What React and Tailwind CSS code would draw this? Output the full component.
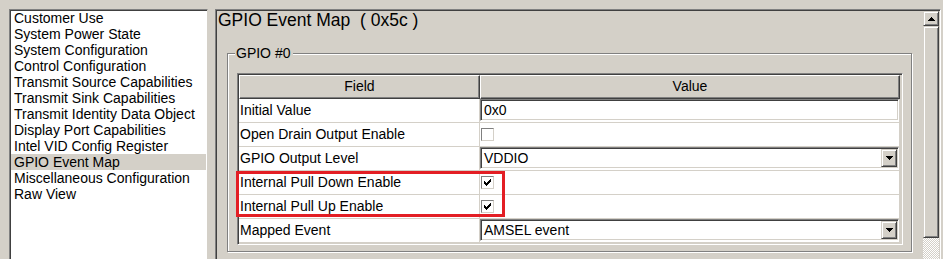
import React from "react";

const listItems = [
  "Customer Use",
  "System Power State",
  "System Configuration",
  "Control Configuration",
  "Transmit Source Capabilities",
  "Transmit Sink Capabilities",
  "Transmit Identity Data Object",
  "Display Port Capabilities",
  "Intel VID Config Register",
  "GPIO Event Map",
  "Miscellaneous Configuration",
  "Raw View",
];

function DownArrow() {
  return (
    <svg width="7" height="4" viewBox="0 0 7 4" shapeRendering="crispEdges">
      <rect x="0" y="0" width="7" height="1" fill="#000" />
      <rect x="1" y="1" width="5" height="1" fill="#000" />
      <rect x="2" y="2" width="3" height="1" fill="#000" />
      <rect x="3" y="3" width="1" height="1" fill="#000" />
    </svg>
  );
}

function UpArrow() {
  return (
    <svg width="7" height="4" viewBox="0 0 7 4" shapeRendering="crispEdges">
      <rect x="3" y="0" width="1" height="1" fill="#000" />
      <rect x="2" y="1" width="3" height="1" fill="#000" />
      <rect x="1" y="2" width="5" height="1" fill="#000" />
      <rect x="0" y="3" width="7" height="1" fill="#000" />
    </svg>
  );
}

function Check() {
  const px = [
    [6, 0],
    [5, 1], [6, 1],
    [0, 2], [4, 2], [5, 2], [6, 2],
    [0, 3], [1, 3], [3, 3], [4, 3], [5, 3],
    [0, 4], [1, 4], [2, 4], [3, 4], [4, 4],
    [1, 5], [2, 5], [3, 5],
    [2, 6],
  ];
  return (
    <svg width="7" height="7" viewBox="0 0 7 7" shapeRendering="crispEdges">
      {px.map(([x, y], i) => (
        <rect key={i} x={x} y={y} width="1" height="1" fill="#000" />
      ))}
    </svg>
  );
}

function Checkbox({ checked }) {
  return (
    <div className="ml-[1px] mt-[5px] w-[13px] h-[13px] bg-white border border-t-[#808080] border-l-[#808080] border-r-[#d4d0c8] border-b-[#d4d0c8] flex items-center justify-center">
      {checked ? <Check /> : null}
    </div>
  );
}

function TextBox({ value }) {
  return (
    <div className="w-[419px] h-[22px] bg-white border border-t-[#808080] border-l-[#808080] border-r-white border-b-white shadow-[inset_1px_1px_0_#404040,inset_-1px_-1px_0_#d4d0c8] pl-[3px] leading-[20px]">
      {value}
    </div>
  );
}

function Dropdown({ value }) {
  return (
    <div className="w-[419px] h-[22px] bg-white border border-t-[#808080] border-l-[#808080] border-r-white border-b-white shadow-[inset_1px_1px_0_#404040,inset_-1px_-1px_0_#d4d0c8] flex p-[1px]">
      <div className="flex-1 pl-[2px] leading-[18px]">{value}</div>
      <div className="w-[16px] h-[18px] bg-[#d4d0c8] border border-t-[#d4d0c8] border-l-[#d4d0c8] border-r-[#404040] border-b-[#404040] shadow-[inset_1px_1px_0_#fff,inset_-1px_-1px_0_#808080] flex items-center justify-center">
        <DownArrow />
      </div>
    </div>
  );
}

const rows = [
  { field: "Initial Value", kind: "text", value: "0x0" },
  { field: "Open Drain Output Enable", kind: "check", value: false },
  { field: "GPIO Output Level", kind: "drop", value: "VDDIO" },
  { field: "Internal Pull Down Enable", kind: "check", value: true },
  { field: "Internal Pull Up Enable", kind: "check", value: true },
  { field: "Mapped Event", kind: "drop", value: "AMSEL event" },
];

export default function App() {
  return (
    <div className="relative w-[943px] h-[259px] overflow-hidden bg-[#d4d0c8] font-['Liberation_Sans',Arial,sans-serif] text-[14px] text-black">
      <div className="flex items-start pt-[9px] pl-[9px]">
        {/* Navigation list */}
        <div className="w-[199px] h-[260px] shrink-0 bg-white border border-t-[#808080] border-l-[#808080] border-r-[#d4d0c8] border-b-white shadow-[inset_1px_1px_0_#404040] px-[1px]">
          {listItems.map((t) => (
            <div
              key={t}
              className={
                "h-[16px] leading-[16px] pl-[3px] whitespace-nowrap " +
                (t === "GPIO Event Map" ? "bg-[#d4d0c8]" : "")
              }
            >
              {t}
            </div>
          ))}
        </div>

        {/* Main panel */}
        <div className="ml-[7px] w-[726px] h-[262px] shrink-0 flex border border-t-[#808080] border-l-[#808080] border-r-white border-b-white shadow-[inset_1px_1px_0_#404040] p-[1px]">
          <div className="w-[706px] pl-[1px]">
            <div className="h-[19px] leading-[19px] text-[17.5px] whitespace-pre">
              GPIO Event Map  ( 0x5c )
            </div>

            {/* Group box */}
            <div className="relative ml-[9px] mt-[23px] w-[685px] h-[199px] border border-[#808080] shadow-[1px_1px_0_#fff,inset_1px_1px_0_#fff]">
              <span className="absolute -top-[8px] left-[7px] bg-[#d4d0c8] pl-[1px] pr-[3px] leading-[15px]">
                GPIO #0
              </span>

              {/* Grid */}
              <div className="ml-[9px] mt-[19px] w-[666px] h-[172px] bg-[#d4d0c8] border border-t-[#808080] border-l-[#808080] border-r-white border-b-white shadow-[inset_1px_1px_0_#404040,inset_-1px_-1px_0_#d4d0c8] p-[1px]">
                <div className="flex h-[24px]">
                  <div className="w-[241px] border border-t-white border-l-white border-r-[#404040] border-b-[#404040] shadow-[inset_-1px_-1px_0_#808080] text-center leading-[21px]">
                    Field
                  </div>
                  <div className="w-[420px] border border-t-white border-l-white border-r-[#404040] border-b-[#404040] shadow-[inset_-1px_-1px_0_#808080] text-center leading-[21px]">
                    Value
                  </div>
                </div>
                {rows.map((r) => (
                  <div key={r.field} className="flex h-[24px]">
                    <div className="w-[241px] bg-white border-r border-b border-[#d4d0c8] pl-[1px] leading-[23px] whitespace-nowrap">
                      {r.field}
                    </div>
                    <div className="w-[420px] bg-white border-r border-b border-[#d4d0c8]">
                      {r.kind === "text" && <TextBox value={r.value} />}
                      {r.kind === "drop" && <Dropdown value={r.value} />}
                      {r.kind === "check" && <Checkbox checked={r.value} />}
                    </div>
                  </div>
                ))}
              </div>
            </div>
          </div>

          {/* Vertical scrollbar */}
          <div className="w-[16px] flex flex-col">
            <div className="h-[15px] bg-[#d4d0c8] border border-t-[#d4d0c8] border-l-[#d4d0c8] border-r-[#404040] border-b-[#404040] shadow-[inset_1px_1px_0_#fff,inset_-1px_-1px_0_#808080] flex items-center justify-center">
              <UpArrow />
            </div>
            <div className="h-[212px] bg-[#d4d0c8] border border-t-[#d4d0c8] border-l-[#d4d0c8] border-r-[#404040] border-b-[#404040] shadow-[inset_1px_1px_0_#fff,inset_-1px_-1px_0_#808080]" />
            <div className="flex-1 bg-[image:repeating-conic-gradient(#ffffff_0%_25%,#d4d0c8_0%_50%)] bg-[length:2px_2px]" />
          </div>
        </div>
      </div>

      {/* Red highlight annotation */}
      <div className="absolute left-[236px] top-[171px] w-[269px] h-[46px] border-[3px] border-[#e31e24]" />
    </div>
  );
}
